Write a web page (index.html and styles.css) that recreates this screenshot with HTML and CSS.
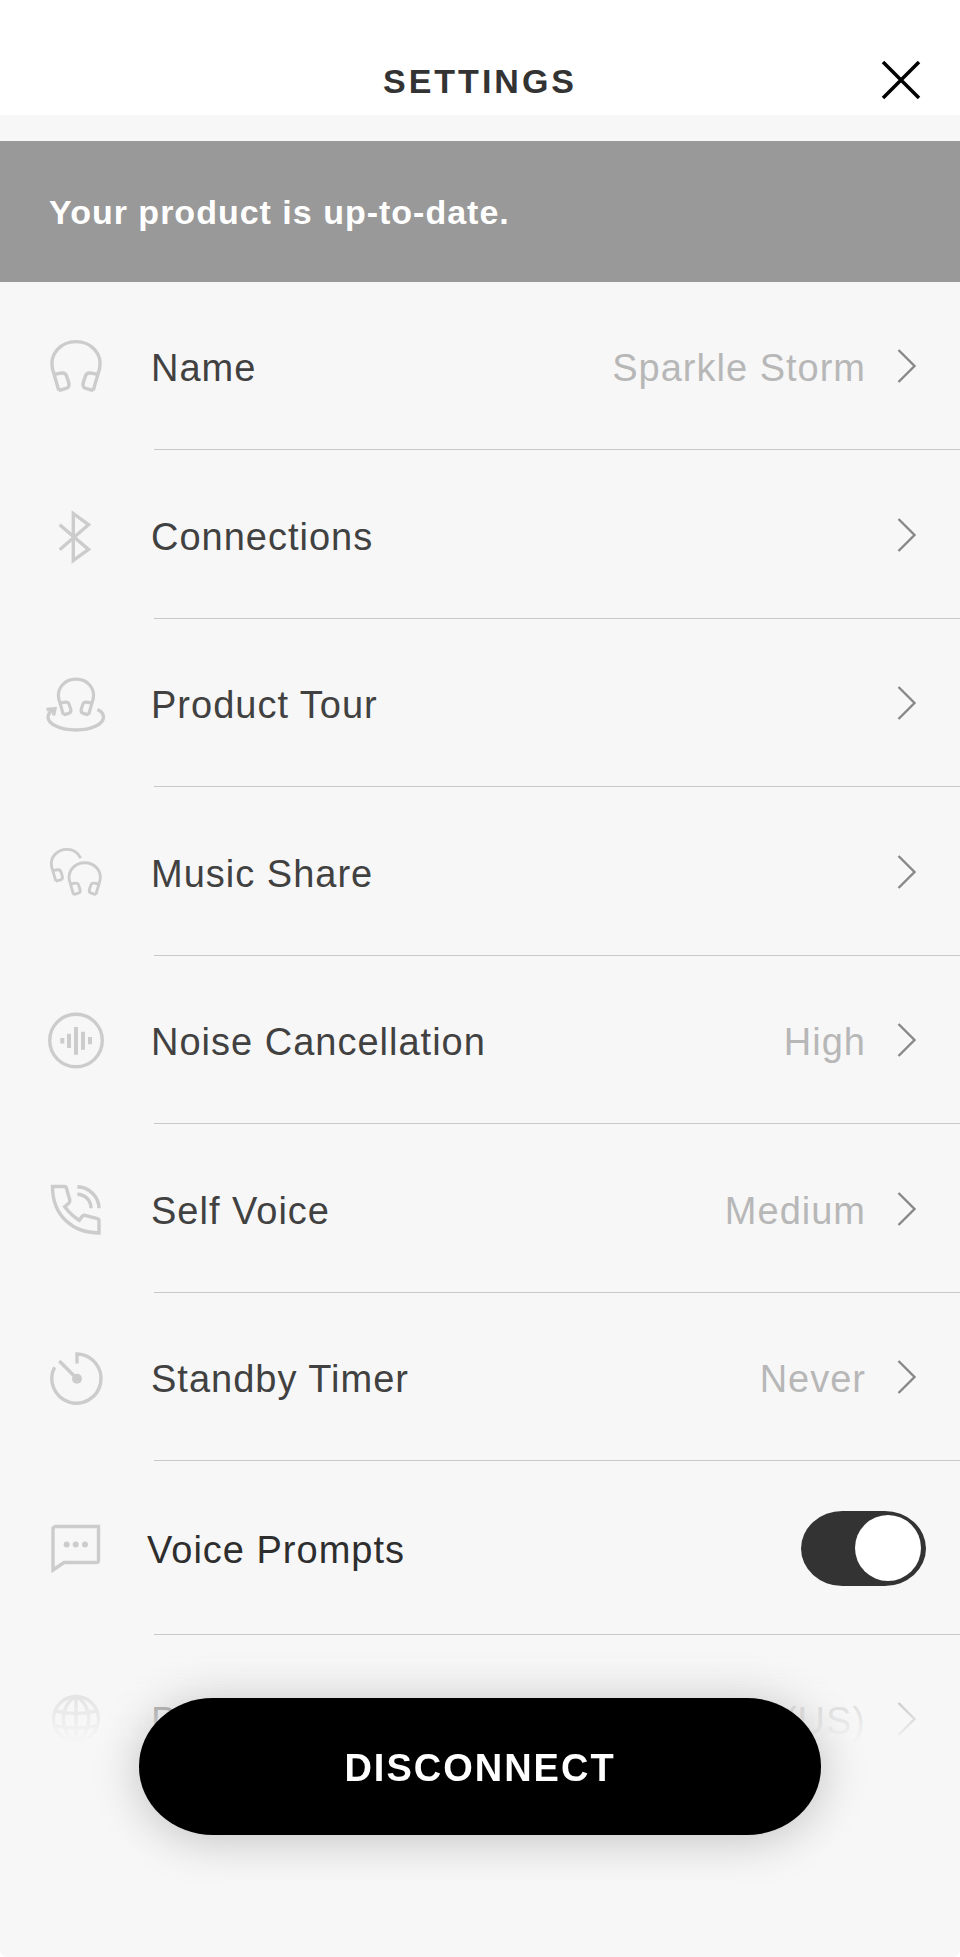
FILE: index.html
```html
<!doctype html>
<html lang="en">
<head>
    <meta charset="UTF-8">
    <meta name="viewport" content="width=device-width, initial-scale=1">
    <title>Settings</title>
    <link rel="stylesheet" href="styles.css">
</head>
<body>
    <svg class="defs" aria-hidden="true">
        <symbol id="headphones" viewBox="0 0 72 72">
            <path d="M18.8 60.5L12.4 38.5C9.5 24 20.5 11.6 36 11.6S62.5 24 59.6 38.5L53.2 60.5"/>
            <path d="M14.2 44.3L21.5 43Q25.8 42.6 26.8 46.5L28.8 53Q29.8 57.4 26.2 58.4L18.8 60.5"/>
            <path d="M57.8 44.3L50.5 43Q46.2 42.6 45.2 46.5L43.2 53Q42.2 57.4 45.8 58.4L53.2 60.5"/>
        </symbol>
        <symbol id="chevron" viewBox="0 0 20 36">
            <path d="M1.5 2L17.5 18L1.5 34"/>
        </symbol>
    </svg>

    <div class="screen">
        <header class="header">
            <h1>SETTINGS</h1>
            <button class="close" type="button" aria-label="Close">
                <svg viewBox="0 0 40 40"><path d="M2 1L38 37M38 1L2 37"/></svg>
            </button>
        </header>

        <p class="banner">Your product is up-to-date.</p>

        <ul class="list">
            <li>
                <a class="row" href="#name">
                    <svg class="icon"><use href="#headphones"/></svg>
                    <span class="label">Name</span>
                    <span class="value">Sparkle Storm</span>
                    <svg class="chevron"><use href="#chevron"/></svg>
                </a>
            </li>
            <li>
                <a class="row" href="#connections">
                    <svg class="icon" viewBox="0 0 72 72">
                        <path d="M19.7 25.7L48.5 50.5L33.3 61.5V14.5L48.5 25.7L19.7 50.7"/>
                    </svg>
                    <span class="label">Connections</span>
                    <svg class="chevron"><use href="#chevron"/></svg>
                </a>
            </li>
            <li>
                <a class="row" href="#tour">
                    <svg class="icon" viewBox="0 0 72 72">
                        <g class="small" transform="translate(9.7 3.7) scale(.73)">
                            <path d="M18.8 60.5L12.4 38.5C9.5 24 20.5 11.6 36 11.6S62.5 24 59.6 38.5L53.2 60.5"/>
                            <path d="M14.2 44.3L21.5 43Q25.8 42.6 26.8 46.5L28.8 53Q29.8 57.4 26.2 58.4L18.8 60.5"/>
                            <path d="M57.8 44.3L50.5 43Q46.2 42.6 45.2 46.5L43.2 53Q42.2 57.4 45.8 58.4L53.2 60.5"/>
                        </g>
                        <path d="M57.5 42.5C61.5 44.5 63.5 47 63.5 50C63.5 57.5 51 63 36 63S8 57.5 8 50C8 47 10 44.5 14 42.5"/>
                        <path d="M6.5 42.5L15 41.7L13.5 48.5"/>
                    </svg>
                    <span class="label">Product Tour</span>
                    <svg class="chevron"><use href="#chevron"/></svg>
                </a>
            </li>
            <li>
                <a class="row" href="#share">
                    <svg class="icon" viewBox="0 0 72 72">
                        <g class="small" transform="translate(3.6 5.8) scale(.65)">
                            <path d="M18.8 60.5L12.4 38.5C9.5 24 20.5 11.6 36 11.6C45.5 11.6 53 16.5 57 25"/>
                            <path d="M14.2 44.3L21.5 43Q25.8 42.6 26.8 46.5L28.8 53Q29.8 57.4 26.2 58.4L18.8 60.5"/>
                        </g>
                        <g class="small" transform="translate(21.3 19.2) scale(.65)">
                            <path d="M18.8 60.5L12.4 38.5C9.5 24 20.5 11.6 36 11.6S62.5 24 59.6 38.5L53.2 60.5"/>
                            <path d="M14.2 44.3L21.5 43Q25.8 42.6 26.8 46.5L28.8 53Q29.8 57.4 26.2 58.4L18.8 60.5"/>
                            <path d="M57.8 44.3L50.5 43Q46.2 42.6 45.2 46.5L43.2 53Q42.2 57.4 45.8 58.4L53.2 60.5"/>
                        </g>
                    </svg>
                    <span class="label">Music Share</span>
                    <svg class="chevron"><use href="#chevron"/></svg>
                </a>
            </li>
            <li>
                <a class="row" href="#noise">
                    <svg class="icon" viewBox="0 0 72 72">
                        <circle cx="36" cy="36.5" r="26.3"/>
                        <path class="bars" d="M22.3 34V39.5M29 29.7V44M36 23V50.7M43 27.7V45.7M50 33V40.3"/>
                    </svg>
                    <span class="label">Noise Cancellation</span>
                    <span class="value">High</span>
                    <svg class="chevron"><use href="#chevron"/></svg>
                </a>
            </li>
            <li>
                <a class="row" href="#voice">
                    <svg class="icon" viewBox="0 0 72 72">
                        <path d="M12.5 13.5H24.5Q26 13.5 26.4 15L29.8 27Q30.2 29 28.8 30.2L24.7 33.7Q31 42 39.3 47.3L42 43.6Q43 42 45 42.4L57.5 45.6Q59 46 59 47.5V60C33 60 12.5 43 12.5 13.5Z"/>
                        <path d="M37.3 13.7Q46 13.7 52.5 20.2T59 35.3M37.3 21.3Q43 21.3 47 25.3T51 35.3"/>
                    </svg>
                    <span class="label">Self Voice</span>
                    <span class="value">Medium</span>
                    <svg class="chevron"><use href="#chevron"/></svg>
                </a>
            </li>
            <li>
                <a class="row" href="#standby">
                    <svg class="icon" viewBox="0 0 72 72">
                        <path d="M37 22.5V13A24.6 24.6 0 1 1 14.6 26.2M19.3 20L37 37.7"/>
                        <circle class="dot" cx="37" cy="37.7" r="5"/>
                    </svg>
                    <span class="label">Standby Timer</span>
                    <span class="value">Never</span>
                    <svg class="chevron"><use href="#chevron"/></svg>
                </a>
            </li>
            <li>
                <label class="row row-toggle">
                    <svg class="icon" viewBox="0 0 72 72">
                        <path d="M13 58V16L15 14.5H58.5V48.5Q58.5 50.5 56.5 50.5H24Z"/>
                        <g class="dot">
                            <circle cx="26.7" cy="32.5" r="3"/>
                            <circle cx="35.7" cy="32.5" r="3"/>
                            <circle cx="45" cy="32.5" r="3"/>
                        </g>
                    </svg>
                    <span class="label">Voice Prompts</span>
                    <input class="toggle" type="checkbox" role="switch" checked>
                </label>
            </li>
            <li>
                <a class="row" href="#language">
                    <svg class="icon" viewBox="0 0 72 72">
                        <circle cx="36" cy="36" r="22.5"/>
                        <path d="M36 13.5V58.5M36 13.5C19 22 19 50 36 58.5M36 13.5C53 22 53 50 36 58.5M15.5 28Q36 33 56.5 28M15.5 43Q36 47 56.5 43"/>
                    </svg>
                    <span class="label">Prompt Language</span>
                    <span class="value">English (US)</span>
                    <svg class="chevron"><use href="#chevron"/></svg>
                </a>
            </li>
        </ul>

        <div class="dock">
            <button class="disconnect" type="button">DISCONNECT</button>
        </div>
    </div>
</body>
</html>
```
FILE: styles.css
```css
*{
    box-sizing: border-box;
}
body{
    margin: 0;
    background-color: #fff;
    font-family: "Liberation Sans", Arial, sans-serif;
    color: #414141;
}
.defs{
    display: none;
}
svg{
    fill: none;
}
.screen{
    min-height: 100vh;
    padding-bottom: 154px;
    background-color: #f7f7f7;
    border-radius: 0 0 8px 8px;
}

/* header */
.header{
    display: grid;
    grid-template-columns: 1fr auto 1fr;
    align-items: center;
    height: 115px;
    padding: 46px 39px 0;
    background-color: #fff;
}
.header h1{
    grid-column: 2;
    margin: 0;
    font-size: 34px;
    line-height: 40px;
    letter-spacing: 3px;
    color: #333;
}
.close{
    justify-self: end;
    width: 40px;
    height: 40px;
    padding: 0;
    border: 0;
    background: none;
    cursor: pointer;
}
.close svg{
    display: block;
    stroke: #000;
    stroke-width: 3.5;
}
.banner{
    margin: 26px 0 0;
    padding: 51px 49px 50px;
    background-color: #999;
    color: #fff;
    font-size: 34px;
    font-weight: bold;
    line-height: 40px;
    letter-spacing: 1px;
}

/* settings rows */
.list{
    margin: 0;
    padding: 0;
    list-style: none;
}
.row{
    position: relative;
    display: flex;
    align-items: center;
    height: 168px;
    padding: 0 43px 0 40px;
    color: inherit;
    font-size: 38px;
    line-height: 44px;
    letter-spacing: 1px;
    text-decoration: none;
}
.list li:nth-child(even) .row{
    height: 169px;
}
.row::after{
    content: "";
    position: absolute;
    left: 154px;
    right: 0;
    bottom: 0;
    height: 1px;
    background-color: #c8c8c8;
}
.list li:last-child .row::after{
    display: none;
}
.icon{
    flex: none;
    width: 72px;
    height: 72px;
    margin-right: 39px;
    stroke: #ccc;
    stroke-width: 3.4;
}
.icon .small{
    stroke-width: 4.4;
}
.icon .bars{
    stroke-width: 4;
}
.icon .dot{
    fill: #ccc;
    stroke: none;
}
.label,
.value{
    padding-top: 4px;
}
.label{
    flex: 1;
}
.value{
    color: #b7b7b7;
}
.chevron{
    flex: none;
    width: 20px;
    height: 36px;
    margin-left: 31px;
    stroke: #888;
    stroke-width: 2.4;
}
.list li .row-toggle,
.list li:nth-child(even) .row-toggle{
    height: 174px;
    padding-right: 34px;
    color: #2e2e2e;
    cursor: pointer;
}
.row-toggle .icon{
    margin-right: 35px;
}
.toggle{
    appearance: none;
    display: flex;
    align-items: center;
    width: 125px;
    height: 75px;
    margin: 0;
    padding: 0 5px;
    border-radius: 42px / 38px;
    background-color: #bbb;
    cursor: pointer;
}
.toggle::before{
    content: "";
    width: 66px;
    height: 66px;
    border-radius: 50%;
    background-color: #fff;
}
.toggle:checked{
    justify-content: flex-end;
    background-color: #333;
}

/* floating button with the fade above it */
.dock{
    position: fixed;
    left: 0;
    right: 0;
    bottom: 0;
    display: flex;
    justify-content: center;
    padding: 63px 0 122px;
    border-radius: 0 0 8px 8px;
    background: linear-gradient(rgba(247,247,247,0), #f7f7f7 110px);
}
.disconnect{
    width: 71%;
    height: 137px;
    padding: 4px 0 0;
    border: 0;
    border-radius: 74px / 68px;
    background-color: #000;
    box-shadow: 0 4px 48px rgba(0,0,0,.22);
    color: #fff;
    font-family: inherit;
    font-size: 38px;
    font-weight: bold;
    letter-spacing: 2px;
    cursor: pointer;
}
```
